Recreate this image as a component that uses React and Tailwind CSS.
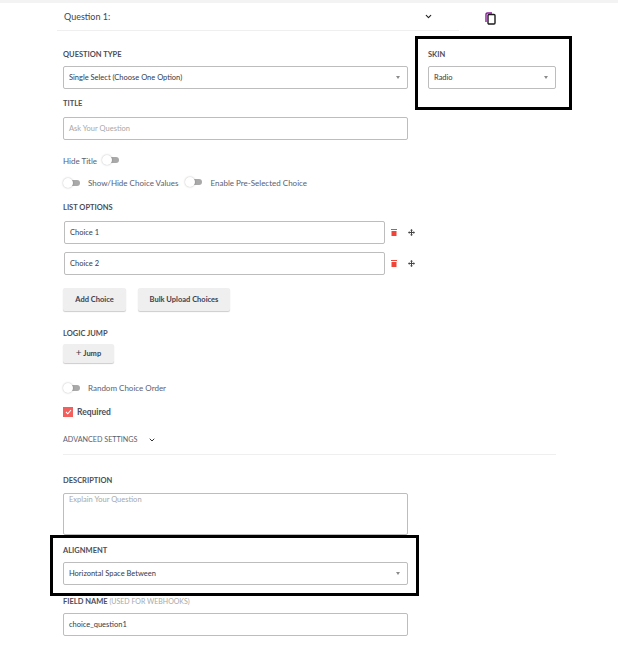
import { ChevronDown } from "lucide-react";

function Label({ children, className = "" }) {
  return (
    <div className={`translate-y-[1px] text-[7.5px] leading-[10px] font-bold text-[#4b4d58] uppercase ${className}`}>
      {children}
    </div>
  );
}

function Field({ children, className = "", muted = false }) {
  return (
    <div
      className={`h-[23px] flex items-center px-[5px] border border-[#bdbdbd] rounded-[2px] bg-white text-[7.5px] ${
        muted ? "text-[#a8a8a8]" : "text-[#33394a]"
      } ${className}`}
    >
      {children}
    </div>
  );
}

function Select({ value, className = "" }) {
  return (
    <Field className={`justify-between ${className}`}>
      <span>{value}</span>
      <span className="w-0 h-0 mr-[2px] border-x-[2.5px] border-x-transparent border-t-[3px] border-t-[#8a8a8a]" />
    </Field>
  );
}

function Toggle() {
  return (
    <span className="relative inline-block w-[17px] h-[10px] shrink-0">
      <span className="absolute right-0 top-[2px] w-[14px] h-[6px] rounded-full bg-[#a9a9a9]" />
      <span className="absolute left-0 top-0 w-[10px] h-[10px] rounded-full bg-white shadow-[0_0_2px_rgba(0,0,0,0.3)]" />
    </span>
  );
}

function TrashIcon() {
  return (
    <svg width="6" height="7" viewBox="0 0 6 7" className="ml-[6px] shrink-0">
      <rect x="0" y="0" width="6" height="1" fill="#f04438" />
      <rect x="0.5" y="2" width="5" height="5" fill="#f04438" />
    </svg>
  );
}

function MoveIcon() {
  return (
    <svg width="7" height="7" viewBox="0 0 7 7" className="ml-[11px] shrink-0">
      <path d="M3.5 0L5 1.5H4V3H5.5V2L7 3.5L5.5 5V4H4V5.5H5L3.5 7L2 5.5H3V4H1.5V5L0 3.5L1.5 2V3H3V1.5H2Z" fill="#444" />
    </svg>
  );
}

function ChoiceRow({ label, className = "" }) {
  return (
    <div className={`flex items-center ${className}`}>
      <Field className="w-[321px] ml-[1px]">{label}</Field>
      <TrashIcon />
      <MoveIcon />
    </div>
  );
}

function GrayButton({ children, className = "" }) {
  return (
    <button className={`h-[23px] rounded-[2px] bg-[#efefef] shadow-[0_1px_1px_rgba(0,0,0,0.2)] text-[7.5px] font-bold text-[#3b4150] ${className}`}>
      {children}
    </button>
  );
}

function CopyIcon() {
  return (
    <svg width="11" height="13" viewBox="0 0 11 13" fill="none">
      <path d="M1 10V2.5C1 1.5 1.6 1 2.5 1H7" stroke="#8a1c9c" strokeWidth="1.4" />
      <rect x="3" y="2.5" width="7" height="9.5" rx="1" stroke="#1b1b1b" strokeWidth="1.4" />
    </svg>
  );
}

export default function App() {
  return (
    <div className="relative w-[618px] h-[662px] bg-white overflow-hidden font-['Lato',sans-serif]">
      <div className="h-[3px] bg-[#f3f3f3]" />

      <div className="ml-[57px] w-[402px] h-[28px] flex items-center border-b border-[#efefef] text-[9px] text-[#3f4450]">
        <span className="ml-[7px] w-[40px] whitespace-nowrap">Question 1:</span>
        <ChevronDown size={9} strokeWidth={3} className="ml-[320px] text-[#222]" />
      </div>
      <div className="absolute left-[485px] top-[12px]">
        <CopyIcon />
      </div>

      <div className="ml-[63px] w-[493px] pt-[18px]">
        <div className="flex justify-between">
          <div className="w-[345px]">
            <Label>Question Type</Label>
            <Select value="Single Select (Choose One Option)" className="mt-[7px]" />
          </div>
          <div className="w-[128px]">
            <Label>Skin</Label>
            <Select value="Radio" className="mt-[7px]" />
          </div>
        </div>

        <div className="w-[345px]">
          <Label className="mt-[9px]">Title</Label>
          <Field muted className="mt-[9px]">Ask Your Question</Field>
        </div>

        <div className="mt-[16px] flex items-center h-[10px] text-[8px] text-[#5a6070]">
          <span>Hide Title</span>
          <span className="ml-[5px]"><Toggle /></span>
        </div>

        <div className="mt-[12px] flex items-center h-[10px] text-[8px] text-[#5a6070]">
          <Toggle />
          <span className="ml-[8px]">Show/Hide Choice Values</span>
          <span className="ml-[7px]"><Toggle /></span>
          <span className="ml-[8px]">Enable Pre-Selected Choice</span>
        </div>

        <Label className="mt-[14px]">List Options</Label>
        <ChoiceRow label="Choice 1" className="mt-[9px]" />
        <ChoiceRow label="Choice 2" className="mt-[8px]" />

        <div className="mt-[13px] flex gap-[12px]">
          <GrayButton className="w-[63px]">Add Choice</GrayButton>
          <GrayButton className="w-[92px]">Bulk Upload Choices</GrayButton>
        </div>

        <Label className="mt-[17px]">Logic Jump</Label>
        <GrayButton className="mt-[6px] w-[51px] !h-[19px]">
          <span className="text-[10px] leading-[10px] font-normal">+</span> Jump
        </GrayButton>

        <div className="mt-[20px] flex items-center h-[10px] text-[8px] text-[#5a6070]">
          <Toggle />
          <span className="ml-[8px]">Random Choice Order</span>
        </div>

        <div className="mt-[14px] flex items-center h-[10px] text-[8.5px] font-bold text-[#4a4f5c]">
          <span className="w-[10px] h-[10px] flex items-center justify-center bg-[#f25f5c]">
            <svg width="7" height="6" viewBox="0 0 7 6" fill="none">
              <path d="M1 3L2.8 4.8L6 1" stroke="white" strokeWidth="1.1" />
            </svg>
          </span>
          <span className="ml-[4px]">Required</span>
        </div>

        <div className="mt-[18px] flex items-center h-[10px] text-[7.2px] text-[#5a6070]">
          <span>ADVANCED SETTINGS</span>
          <ChevronDown size={8} strokeWidth={3} className="ml-[11px] text-[#333]" />
        </div>

        <div className="mt-[9px] border-b border-[#efefef]" />

        <div className="w-[345px]">
          <Label className="mt-[20px]">Description</Label>
          <div className="mt-[8px] h-[42px] px-[5px] pt-[1px] border border-[#bdbdbd] rounded-[2px] text-[7.5px] leading-[10px] text-[#a8a8a8]">
            Explain Your Question
          </div>

          <Label className="mt-[10px]">Alignment</Label>
          <Select value="Horizontal Space Between" className="mt-[7px]" />

          <Label className="mt-[10px]">
            Field Name <span className="text-[7px] font-normal text-[#a8a8a8]">(Used for webhooks)</span>
          </Label>
          <Field className="mt-[7px]">choice_question1</Field>
        </div>
      </div>

      {/* annotation boxes drawn over the form */}
      <div className="absolute left-[415px] top-[36px] w-[157px] h-[74px] border-[3px] border-black" />
      <div className="absolute left-[50px] top-[535px] w-[369px] h-[61px] border-[3px] border-black" />
    </div>
  );
}
